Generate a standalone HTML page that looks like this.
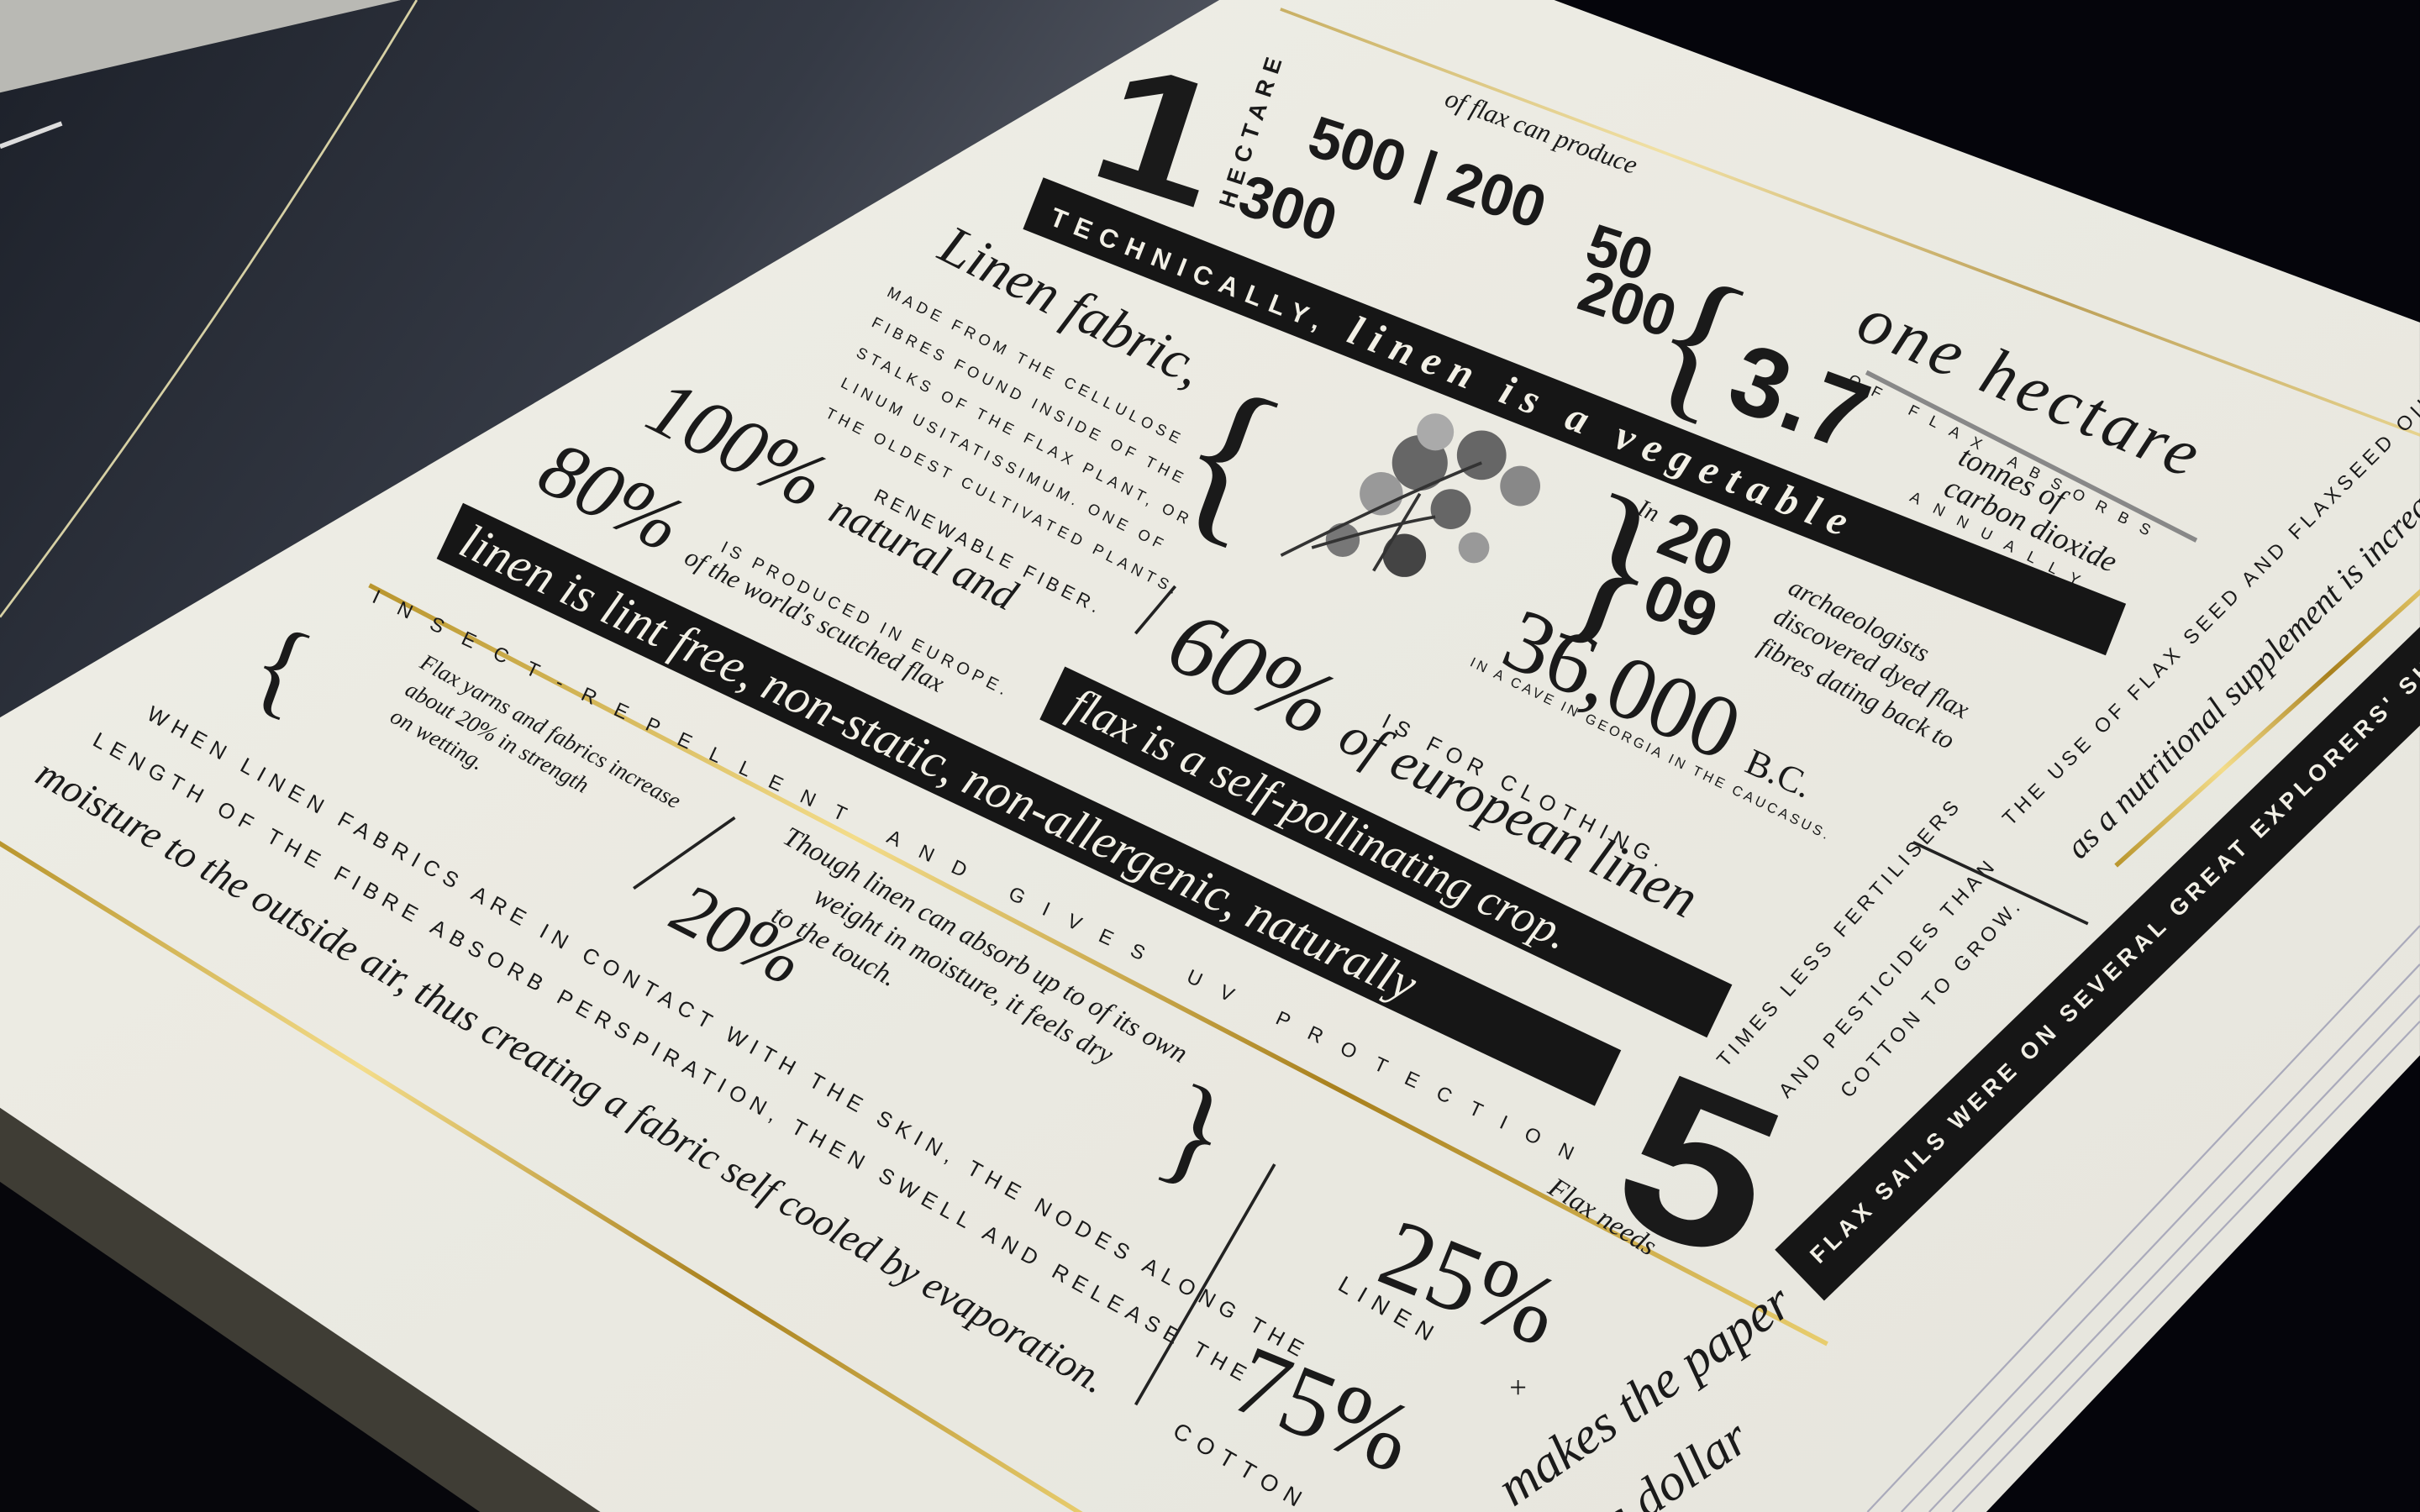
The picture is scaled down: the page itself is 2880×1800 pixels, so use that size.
<!DOCTYPE html>
<html><head><meta charset="utf-8"><style>
html,body{margin:0;padding:0;width:2880px;height:1800px;overflow:hidden;background:#07070d;}
#st{position:absolute;left:0;top:0;width:1568px;height:980px;transform:scale(1.8367);transform-origin:0 0;overflow:hidden;background:#05050b;font-family:"Liberation Serif",serif;}
.a{position:absolute;transform-origin:0 0;white-space:nowrap;color:#1a1a1a;line-height:1;}
.bar{position:absolute;transform-origin:0 0;background:#161616;color:#f2f0e6;white-space:nowrap;font-style:italic;}
.caps{font-family:"Liberation Sans",sans-serif;text-transform:uppercase;letter-spacing:3px;font-size:11px;}
.ln{position:absolute;transform-origin:0 0;height:2px;background:#222;}
.gold{position:absolute;transform-origin:0 0;height:3px;background:linear-gradient(90deg,#b9962e,#f3dc8a,#a8801d,#e8cd6e);}
.bold{font-family:"Liberation Sans",sans-serif;font-weight:bold;}
</style></head><body><div id="st">
<svg width="1568" height="980" style="position:absolute;left:0;top:0">
<defs>
<linearGradient id="lp" x1="0" y1="0" x2="1" y2="0.4"><stop offset="0" stop-color="#1c2029"/><stop offset="0.6" stop-color="#353a45"/><stop offset="1" stop-color="#585c66"/></linearGradient>
<linearGradient id="cp" x1="0" y1="0" x2="1" y2="1"><stop offset="0" stop-color="#efeee6"/><stop offset="1" stop-color="#e6e5dd"/></linearGradient>
</defs>
<polygon points="0,0 260,0 0,70" fill="#b9b9b4"/>
<polygon points="0,60 260,0 790,0 0,465" fill="url(#lp)"/>
<path d="M0,95 L40,80" stroke="#ddd" stroke-width="3"/>
<path d="M270,0 Q150,200 0,400" stroke="#d6d0a4" stroke-width="1.5" fill="none"/>
<polygon points="0,700 0,980 430,980" fill="#3f3d35"/>
<polygon points="0,766 0,980 311,980" fill="#06060b"/>
<polygon points="790,0 1007,0 1568,209 1568,684 1287,980 389,980 0,718 0,465" fill="url(#cp)"/>
<path d="M1568,600 L1210,980 M1568,625 L1232,980 M1568,645 L1250,980 M1568,662 L1265,980" stroke="#aab" stroke-width="1.2"/>
</svg>
<div class="gold" style="left:830px;top:5px;width:800px;height:2px;transform:rotate(20.5deg);opacity:.7"></div>
<div class="gold" style="left:240px;top:378px;width:1065px;transform:rotate(27.5deg)"></div>
<div class="gold" style="left:0px;top:545px;width:830px;transform:rotate(31.8deg)"></div>
<div class="gold" style="left:1370px;top:560px;width:280px;transform:rotate(-42deg)"></div>
<div class="ln" style="left:1210px;top:240px;width:240px;height:3px;background:#888;transform:rotate(27deg)"></div>

<div class="bar" style="left:676px;top:115px;width:740px;height:36px;transform:rotate(21.5deg);font-size:27px;line-height:36px;padding-left:14px;font-weight:bold;letter-spacing:7px"><span class="caps" style="font-style:normal;font-size:17px;letter-spacing:6px;font-weight:bold">Technically,</span> linen is a vegetable</div>
<div class="bar" style="left:300px;top:326px;width:820px;height:40px;transform:rotate(25.3deg);font-size:32px;line-height:40px;padding-left:10px">linen is lint free, non-static, non-allergenic, naturally</div>
<div class="bar" style="left:690px;top:432px;width:465px;height:38px;transform:rotate(25.5deg);font-size:30px;line-height:38px;padding-left:14px">flax is a self-pollinating crop.</div>
<div class="bar" style="left:1150px;top:810px;width:570px;height:46px;transform:rotate(-44deg);font-style:normal;line-height:46px;padding-left:14px"><span class="caps" style="color:#f2f0e6;font-size:15px;font-weight:bold">Flax sails were on several great explorers' ships, incl</span></div>

<div class="a bold" style="left:732px;top:22px;font-size:112px;font-weight:900;transform:rotate(18deg) scaleX(1.25)">1</div>
<div class="a caps" style="left:788px;top:132px;font-size:15px;letter-spacing:5px;font-weight:bold;transform:rotate(-72deg)">Hectare</div>
<div class="a bold" style="left:855px;top:70px;font-size:38px;transform:rotate(18deg)">500 | 200</div>
<div class="a bold" style="left:810px;top:108px;font-size:38px;transform:rotate(18deg)">300</div>
<div class="a bold" style="left:1035px;top:140px;font-size:38px;transform:rotate(18deg)">50</div>
<div class="a bold" style="left:1030px;top:170px;font-size:38px;transform:rotate(18deg)">200</div>
<div class="a" style="left:940px;top:55px;font-style:italic;font-size:17px;transform:rotate(20deg)">of flax can produce</div>
<div class="a" style="left:1095px;top:160px;font-size:110px;transform:rotate(20deg)">{</div>
<div class="a" style="left:1215px;top:185px;font-style:italic;font-size:44px;letter-spacing:3px;transform:rotate(23deg)">one hectare</div>
<div class="a caps" style="left:1200px;top:242px;font-size:10px;letter-spacing:9px;transform:rotate(27deg)">of flax absorbs</div>
<div class="a bold" style="left:1135px;top:212px;font-size:64px;transform:rotate(20deg)">3.7</div>
<div class="a" style="left:1275px;top:285px;font-style:italic;font-size:20px;transform:rotate(25deg);line-height:1.1">tonnes of<br>carbon dioxide</div>
<div class="a caps" style="left:1240px;top:318px;font-size:10px;letter-spacing:10px;transform:rotate(27deg)">annually</div>

<div class="a" style="left:620px;top:140px;font-style:italic;font-size:36px;transform:rotate(27deg)">Linen fabric,</div>
<div class="a caps" style="left:580px;top:180px;font-size:10px;transform:rotate(27deg);line-height:22px">made from the cellulose<br>fibres found inside of the<br>stalks of the flax plant, or<br>linum usitatissimum. one of<br>the oldest cultivated plants.</div>
<div class="a" style="left:435px;top:238px;font-style:italic;font-size:52px;transform:rotate(27deg)">100% <span style="font-size:28px">natural and</span></div>
<div class="a" style="left:365px;top:278px;font-style:italic;font-size:52px;transform:rotate(27deg)">80% <span style="font-size:17px">of the world's scutched flax</span></div>
<div class="a caps" style="left:570px;top:315px;font-size:12px;transform:rotate(27deg)">renewable fiber.</div>
<div class="a caps" style="left:470px;top:350px;font-size:11px;transform:rotate(27deg)">is produced in europe.</div>
<div class="a" style="left:790px;top:230px;font-size:120px;transform:rotate(20deg)">{</div>
<svg style="position:absolute;left:810px;top:260px" width="200" height="130"><g fill="#666"><circle cx="110" cy="40" r="18"/><circle cx="150" cy="35" r="16"/><circle cx="85" cy="60" r="14" fill="#999"/><circle cx="130" cy="70" r="13"/><circle cx="175" cy="55" r="13" fill="#888"/><circle cx="120" cy="20" r="12" fill="#aaa"/><circle cx="60" cy="90" r="11" fill="#777"/><circle cx="100" cy="100" r="14" fill="#444"/><circle cx="145" cy="95" r="10" fill="#999"/></g><path d="M20,100 Q100,60 150,40 M40,95 Q90,80 120,75 M80,110 L110,60" stroke="#333" fill="none" stroke-width="2"/></svg>
<div class="a" style="left:1040px;top:300px;font-size:120px;transform:rotate(20deg)">}</div>
<div class="a" style="left:1065px;top:322px;font-style:italic;font-size:16px;transform:rotate(25deg)">In</div>
<div class="a bold" style="left:1085px;top:325px;font-size:42px;transform:rotate(22deg)">20</div>
<div class="a bold" style="left:1075px;top:365px;font-size:42px;transform:rotate(22deg)">09</div>
<div class="a" style="left:990px;top:385px;font-size:58px;transform:rotate(24deg)">36,000 <span style="font-size:24px">B.C.</span></div>
<div class="a caps" style="left:955px;top:425px;font-size:9px;letter-spacing:2px;transform:rotate(26deg)">in a cave in georgia in the caucasus.</div>
<div class="a" style="left:1165px;top:370px;font-style:italic;font-size:17px;transform:rotate(27deg);line-height:1.25">archaeologists<br>discovered dyed flax<br>fibres dating back to</div>
<div class="a" style="left:775px;top:385px;font-size:60px;font-style:italic;transform:rotate(26deg)">60% <span style="font-size:36px">of european linen</span></div>
<div class="a caps" style="left:900px;top:460px;font-size:14px;letter-spacing:5px;transform:rotate(27deg)">is for clothing.</div>
<div class="ln" style="left:735px;top:410px;width:40px;transform:rotate(-50deg)"></div>

<div class="a caps" style="left:245px;top:380px;font-size:13px;letter-spacing:14px;transform:rotate(25deg)">insect-repellent and gives uv protection</div>
<div class="a" style="left:178px;top:395px;font-size:70px;transform:rotate(20deg)">{</div>
<div class="a" style="left:278px;top:420px;font-style:italic;font-size:15px;transform:rotate(29deg);line-height:20px">Flax yarns and fabrics increase<br>about 20% in strength<br>on wetting.</div>
<div class="a" style="left:450px;top:565px;font-size:48px;font-style:italic;transform:rotate(27deg)">20%</div>
<div class="a" style="left:515px;top:530px;font-style:italic;font-size:18px;transform:rotate(29deg);line-height:24px">Though linen can absorb up to of its own<br>&nbsp;&nbsp;&nbsp;&nbsp;&nbsp;&nbsp;&nbsp;&nbsp;weight in moisture, it feels dry<br>&nbsp;&nbsp;&nbsp;&nbsp;to the touch.</div>
<div class="a" style="left:770px;top:690px;font-size:80px;transform:rotate(20deg)">}</div>
<div class="ln" style="left:410px;top:575px;width:80px;transform:rotate(-35deg)"></div>
<div class="a caps" style="left:100px;top:455px;font-size:14px;letter-spacing:4.5px;transform:rotate(29deg)">when linen fabrics are in contact with the skin, the nodes along the</div>
<div class="a caps" style="left:65px;top:472px;font-size:14px;letter-spacing:4.5px;transform:rotate(29deg)">length of the fibre absorb perspiration, then swell and release the</div>
<div class="a" style="left:32px;top:488px;font-style:italic;font-size:26px;transform:rotate(30deg)">moisture to the outside air, thus creating a fabric self cooled by evaporation.</div>

<div class="a bold" style="left:1085px;top:672px;font-size:145px;transform:rotate(22deg) scaleX(1.15)">5</div>
<div class="a caps" style="left:1110px;top:685px;font-size:13px;transform:rotate(-48deg)">times less fertilisers</div>
<div class="a caps" style="left:1150px;top:705px;font-size:13px;transform:rotate(-48deg)">and pesticides than</div>
<div class="a caps" style="left:1190px;top:705px;font-size:13px;transform:rotate(-48deg)">cotton to grow.</div>
<div class="a" style="left:1010px;top:760px;font-style:italic;font-size:18px;transform:rotate(32deg)">Flax needs</div>
<div class="a caps" style="left:1295px;top:528px;font-size:13px;transform:rotate(-45deg)">the use of flax seed and flaxseed oil</div>
<div class="a" style="left:1335px;top:545px;font-style:italic;font-size:22px;transform:rotate(-45deg)">as a nutritional supplement is increasing</div>
<div class="ln" style="left:1240px;top:545px;width:125px;transform:rotate(25deg)"></div>
<div class="ln" style="left:735px;top:910px;width:180px;transform:rotate(-60deg)"></div>
<div class="a" style="left:910px;top:780px;font-size:64px;transform:rotate(22deg)">25%</div>
<div class="a caps" style="left:872px;top:825px;font-size:15px;letter-spacing:6px;transform:rotate(30deg)">linen</div>
<div class="a" style="left:978px;top:890px;font-size:20px">+</div>
<div class="a" style="left:815px;top:862px;font-size:64px;transform:rotate(22deg)">75%</div>
<div class="a caps" style="left:765px;top:920px;font-size:15px;letter-spacing:6px;transform:rotate(30deg)">cotton</div>
<div class="a" style="left:965px;top:955px;font-style:italic;font-size:34px;transform:rotate(-35deg)">makes the paper</div>
<div class="a" style="left:1020px;top:985px;font-style:italic;font-size:34px;transform:rotate(-35deg)">us dollar</div>
</div></body></html>
